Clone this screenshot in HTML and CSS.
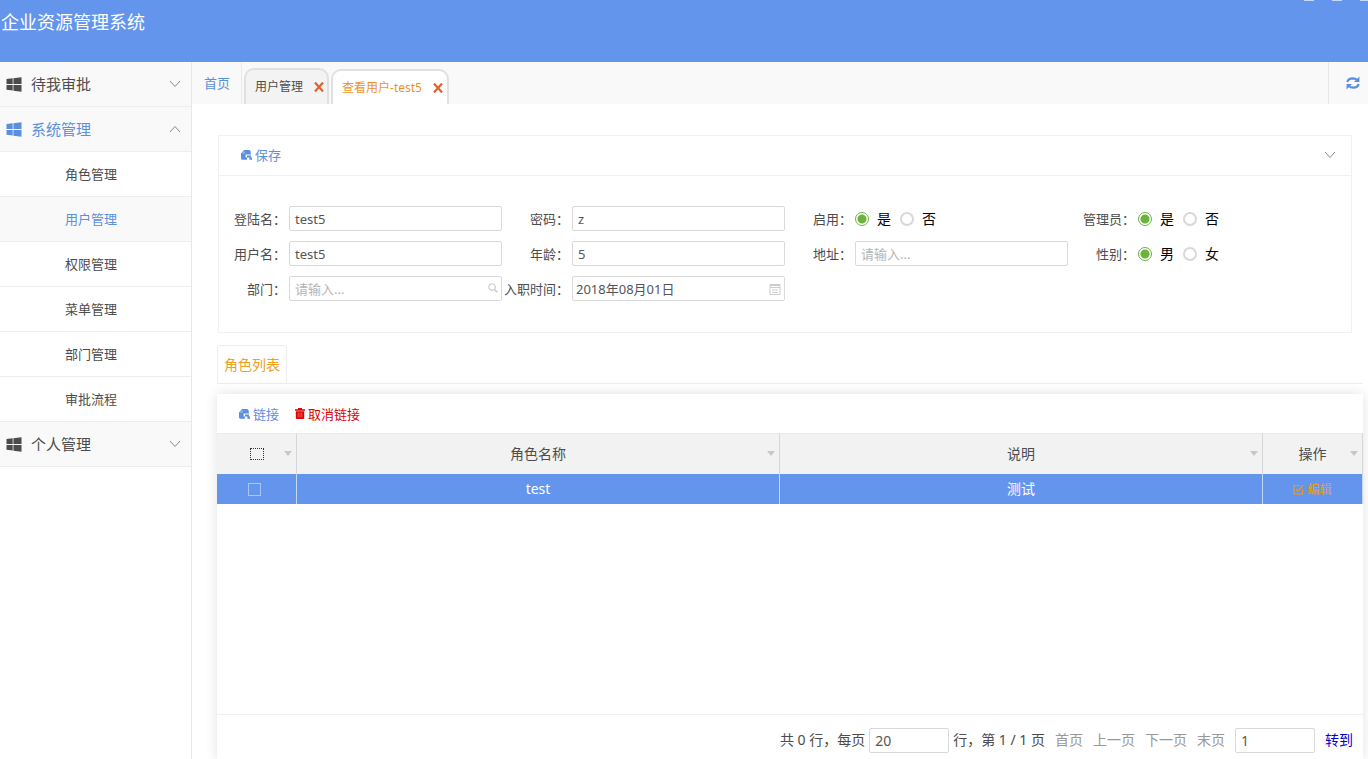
FILE: index.html
```html
<!DOCTYPE html>
<html lang="zh-CN">
<head>
<meta charset="utf-8">
<title>企业资源管理系统</title>
<link rel="stylesheet" href="styles.css">
</head>
<body>
<svg class="symbols" aria-hidden="true">
  <symbol id="win" viewBox="0 0 16 16"><path d="M0 2.2 6.6 1.4V7.5H0ZM7.4 1.2 16 .2V7.5H7.4ZM0 8.4H6.6V14.5L0 13.7ZM7.4 8.4H16V15.8L7.4 14.7Z" fill="currentColor"/></symbol>
  <symbol id="down" viewBox="0 0 12 8"><path d="M1 1 6 6.5 11 1" fill="none" stroke="currentColor"/></symbol>
  <symbol id="up" viewBox="0 0 12 8"><path d="M1 7 6 1.5 11 7" fill="none" stroke="currentColor"/></symbol>
  <symbol id="cross" viewBox="0 0 10 10"><path d="M1 .5 9 9.5M9 .5 1 9.5" fill="none" stroke="currentColor" stroke-width="2.2"/></symbol>
  <symbol id="save" viewBox="0 0 11 10"><path d="M3 0H8Q9.4 0 9.6 1.5L10 4.6H4.6V7.6H6V9.8H1.5Q0 9.8 0 8.3V3.8Q0 2.8 1 2.4ZM6 5.4H10V7.4H11V9.8H8.4V7.6H6Z" fill="currentColor"/><path d="M3.2 1.4V3.2H1.4" fill="none" stroke="#fff" stroke-width=".7" opacity=".7"/></symbol>
  <symbol id="trash" viewBox="0 0 10 11"><path d="M3 0H7V1.3H10V2.8H0V1.3H3ZM.8 3.2H9.2V9.8Q9.2 11 8 11H2Q.8 11 .8 9.8Z" fill="currentColor"/><path d="M3.2 4.6V9.4M5 4.6V9.4M6.8 4.6V9.4" stroke="#fff" stroke-width=".6" opacity=".6"/></symbol>
  <symbol id="edit" viewBox="0 0 11 11"><path d="M9.5 5.5V10H1V1.5H7M3.2 5 5 7.2 10 1.2" fill="none" stroke="currentColor" stroke-width="1.2"/></symbol>
  <symbol id="refresh" viewBox="0 0 14 14"><path d="M1.4 6Q2 2.6 6.6 2.4 9.6 2.4 11.2 4M12.6 8Q12 11.4 7.4 11.6 4.4 11.6 2.8 10" fill="none" stroke="currentColor" stroke-width="2.2"/><path d="M13.4 .6V6H8ZM.6 13.4V8H6Z" fill="currentColor"/></symbol>
  <symbol id="search" viewBox="0 0 11 11"><circle cx="4.5" cy="4.5" r="3.6" fill="none" stroke="currentColor" stroke-width="1.2"/><path d="M7 7 10.3 10.3" stroke="currentColor" stroke-width="1.6"/></symbol>
  <symbol id="calendar" viewBox="0 0 12 12"><path d="M1 1.5H11V11.5H1ZM1 2.5H11M1 4.5H11M3 7H9M3 9.5H9" fill="none" stroke="currentColor"/></symbol>
</svg>

<header class="topbar">
  <h1 class="brand">企业资源管理系统</h1>
  <div class="window-marks"><span></span><span></span><span></span></div>
</header>

<div class="layout">
  <nav class="sidebar">
    <button class="group"><svg class="win"><use href="#win"/></svg><span class="group-name">待我审批</span><svg class="chevron"><use href="#down"/></svg></button>
    <button class="group group-active"><svg class="win"><use href="#win"/></svg><span class="group-name">系统管理</span><svg class="chevron"><use href="#up"/></svg></button>
    <a class="item" href="#">角色管理</a>
    <a class="item item-active" href="#">用户管理</a>
    <a class="item" href="#">权限管理</a>
    <a class="item" href="#">菜单管理</a>
    <a class="item" href="#">部门管理</a>
    <a class="item" href="#">审批流程</a>
    <button class="group"><svg class="win"><use href="#win"/></svg><span class="group-name">个人管理</span><svg class="chevron"><use href="#down"/></svg></button>
  </nav>

  <main class="main">
    <div class="tabs">
      <a class="home" href="#">首页</a>
      <div class="tab"><a href="#">用户管理</a><button class="close" aria-label="关闭用户管理"><svg><use href="#cross"/></svg></button></div>
      <div class="tab tab-active"><a href="#">查看用户-test5</a><button class="close" aria-label="关闭查看用户"><svg><use href="#cross"/></svg></button></div>
      <button class="refresh" aria-label="刷新"><svg><use href="#refresh"/></svg></button>
    </div>

    <section class="panel">
      <div class="panel-head">
        <button class="action"><svg class="save"><use href="#save"/></svg>保存</button>
        <button class="fold" aria-label="折叠"><svg class="chevron"><use href="#down"/></svg></button>
      </div>
      <form class="form">
        <div class="field"><label for="login">登陆名：</label><input class="text" id="login" value="test5"></div>
        <div class="field"><label for="pwd">密码：</label><input class="text" id="pwd" value="z"></div>
        <div class="field"><span class="caption">启用：</span><div class="radios"><label><input type="radio" name="enabled" checked>是</label><label><input type="radio" name="enabled">否</label></div></div>
        <div class="field"><span class="caption">管理员：</span><div class="radios"><label><input type="radio" name="admin" checked>是</label><label><input type="radio" name="admin">否</label></div></div>
        <div class="field"><label for="user">用户名：</label><input class="text" id="user" value="test5"></div>
        <div class="field"><label for="age">年龄：</label><input class="text" id="age" value="5"></div>
        <div class="field"><label for="addr">地址：</label><input class="text" id="addr" placeholder="请输入..."></div>
        <div class="field"><span class="caption">性别：</span><div class="radios"><label><input type="radio" name="sex" checked>男</label><label><input type="radio" name="sex">女</label></div></div>
        <div class="field"><label for="dept">部门：</label><div class="with-icon"><input class="text" id="dept" placeholder="请输入..."><svg class="search"><use href="#search"/></svg></div></div>
        <div class="field"><label for="date">入职时间：</label><div class="with-icon"><input class="text date" id="date" value="2018年08月01日"><svg class="calendar"><use href="#calendar"/></svg></div></div>
      </form>
    </section>

    <div class="subtabs"><a class="subtab" href="#">角色列表</a></div>

    <section class="grid-panel">
      <div class="grid-tools">
        <button class="action"><svg class="save"><use href="#save"/></svg>链接</button>
        <button class="action danger"><svg class="trash"><use href="#trash"/></svg>取消链接</button>
      </div>
      <table class="roles">
        <colgroup><col class="col-check"><col><col><col class="col-ops"></colgroup>
        <thead>
          <tr>
            <th><div class="cell"><input class="check-all" type="checkbox" aria-label="全选"><i class="sort"></i></div></th>
            <th><div class="cell">角色名称<i class="sort"></i></div></th>
            <th><div class="cell">说明<i class="sort"></i></div></th>
            <th><div class="cell">操作<i class="sort"></i></div></th>
          </tr>
        </thead>
        <tbody>
          <tr>
            <td><input class="check" type="checkbox" aria-label="选择 test"></td>
            <td>test</td>
            <td>测试</td>
            <td><button class="edit"><svg><use href="#edit"/></svg>编辑</button></td>
          </tr>
        </tbody>
      </table>
      <footer class="pager">
        <label for="size">共 0 行，每页</label>
        <input class="text page-input" id="size" value="20">
        <span class="page-info">行，第 1 / 1 页</span>
        <a href="#">首页</a><a href="#">上一页</a><a href="#">下一页</a><a href="#">末页</a>
        <input class="text page-input" value="1" aria-label="页码">
        <a class="go" href="#">转到</a>
      </footer>
    </section>
  </main>
</div>
</body>
</html>
```

FILE: styles.css
```css
* { box-sizing: border-box; }

body {
  margin: 0;
  height: 100vh;
  display: flex;
  flex-direction: column;
  overflow: hidden;
  background: #fff;
  color: #4c4c4c;
  font: 14px/20px "Noto Sans", "Noto Sans CJK SC", sans-serif;
}

button, input { font: inherit; color: inherit; }
button { padding: 0; border: 0; background: none; cursor: pointer; }
a { color: inherit; text-decoration: none; }
svg { display: block; flex: none; }
.symbols { position: absolute; width: 0; height: 0; }

.topbar {
  flex: none;
  height: 62px;
  display: flex;
  justify-content: space-between;
  background: #6495ed;
  color: #fff;
}
.brand { margin: 0; padding: 10px 1px; font-size: 18px; line-height: 24px; font-weight: 400; }
.window-marks { display: flex; gap: 18px; }
.window-marks span { width: 10px; height: 1px; background: #c3d8fb; }
.window-marks span:last-child { width: 8px; }

.layout { flex: 1; min-height: 0; display: flex; }

.sidebar { flex: none; width: 192px; border-right: 1px solid #e8e8e8; }
.group, .item {
  width: 100%;
  height: 45px;
  display: flex;
  align-items: center;
  border-bottom: 1px solid #eee;
}
.group { gap: 9px; padding: 0 10px 0 6px; background: #f9f9f9; font-size: 15px; }
.group-name { flex: 1; text-align: left; }
.group-active, .item-active { color: #5b8fe0; }
.win { width: 16px; height: 15px; }
.chevron { width: 12px; height: 8px; color: #888; }
.item { padding-left: 65px; font-size: 13px; }
.item-active { background: #f9f9f9; }

.main { flex: 1; min-width: 0; display: flex; flex-direction: column; }

.tabs { flex: none; height: 42px; display: flex; align-items: flex-end; gap: 2px; background: #f9f9f9; font-size: 12px; }
.home {
  align-self: stretch;
  display: flex;
  align-items: center;
  padding: 0 11px 0 12px;
  border-right: 1px solid #eaeaea;
  color: #5b8fe0;
  font-size: 13px;
}
.tab {
  height: 36px;
  display: flex;
  align-items: center;
  gap: 11px;
  padding: 0 3px 0 9px;
  border: 2px solid #e0e0e0;
  border-bottom: 0;
  border-radius: 10px 10px 0 0;
  background: #f3f3f3;
}
.tab-active { height: 35px; padding-right: 4px; background: #fff; color: #f0921e; font-size: 12px; }
.close { color: #e2622f; }
.close svg { width: 10px; height: 10px; }
.refresh { align-self: stretch; margin-left: auto; padding: 0 8px 0 17px; border-left: 1px solid #e8e8e8; color: #5b8fe0; }
.refresh svg { width: 14px; height: 14px; }

.panel { flex: none; margin: 31px 16px 0 26px; border: 1px solid #f1f1f1; }
.panel-head {
  height: 40px;
  display: flex;
  align-items: center;
  justify-content: space-between;
  padding: 0 15px 2px 22px;
  border-bottom: 1px solid #f1f1f1;
}
.action { display: flex; align-items: center; gap: 3px; color: #5b8fe0; font-size: 13px; }
.danger { color: #e00000; }
.save { width: 11px; height: 10px; }
.trash { width: 10px; height: 11px; }

.form {
  display: grid;
  grid-template-columns: repeat(4, 1fr);
  row-gap: 10px;
  padding: 30px 0 31px;
  font-size: 13px;
}
.field { display: flex; align-items: center; height: 25px; min-width: 0; }
.field > label, .caption { flex: none; width: 70px; padding-right: 3px; text-align: right; white-space: nowrap; }
.text {
  flex: 1;
  width: 100%;
  min-width: 0;
  height: 25px;
  padding: 0 5px;
  border: 1px solid #d9d9d9;
  border-radius: 2px;
  background: #fff;
  color: #555;
}
.text::placeholder { color: #b5b5b5; }
.date { padding: 0 3px; }
.with-icon { flex: 1; min-width: 0; position: relative; display: flex; }
.with-icon svg { position: absolute; right: 4px; top: 7px; color: #ccc; }
.search { width: 10px; height: 10px; }
.calendar { width: 12px; height: 12px; }
.radios { display: flex; gap: 9px; color: #000; font-size: 14px; }
.radios label { display: flex; align-items: center; gap: 8px; }
.radios input {
  appearance: none;
  width: 14px;
  height: 14px;
  margin: 0;
  border: 2px solid #d8d8d8;
  border-radius: 50%;
  background: #fff;
}
.radios input:checked { border: 1px solid #6cb33e; background: radial-gradient(circle, #6cb33e 4px, #fff 5px); }

.subtabs { flex: none; display: flex; margin: 12px 5px 10px 25px; border-bottom: 1px solid #ececf2; }
.subtab {
  height: 38px;
  padding: 9px 6px;
  border: 1px solid #eee;
  border-bottom: 0;
  border-radius: 3px 3px 0 0;
  color: #f0a020;
}

.grid-panel {
  flex: 1;
  min-height: 0;
  display: flex;
  flex-direction: column;
  margin: 0 5px 0 25px;
  background: #fff;
  box-shadow: 0 0 12px rgba(0, 0, 0, 0.12);
}
.grid-tools { height: 39px; display: flex; align-items: center; gap: 16px; padding: 0 22px; }
.roles { width: 100%; table-layout: fixed; border-collapse: separate; border-spacing: 0; }
.col-check { width: 80px; }
.col-ops { width: 100px; }
.roles th, .roles td { padding: 0; border-right: 1px solid #d6d6d6; font-weight: 400; text-align: center; vertical-align: middle; }
.roles th { height: 41px; background: #f2f2f2; border-top: 1px solid #ebebeb; }
.roles td { height: 30px; background: #6495ed; color: #fff; border-color: #c5d8f8; }
.cell { position: relative; height: 20px; display: flex; align-items: center; justify-content: center; }
.sort {
  position: absolute;
  right: 4px;
  top: 7px;
  border: 4px solid transparent;
  border-top: 5px solid #c8c8c8;
  border-bottom: 0;
}
.check-all, .check { appearance: none; display: block; margin: 0 auto; }
.check-all { width: 14px; height: 12px; border: 1px dotted #333; }
.roles td:first-child { padding-right: 4px; }
.check { width: 13px; height: 13px; border: 1px solid #a9c5f6; }
.edit { display: inline-flex; align-items: center; gap: 3px; vertical-align: middle; color: #eb9c14; font-size: 12px; font-weight: 500; }
.edit svg { width: 11px; height: 11px; }

.pager {
  flex: none;
  height: 45px;
  margin-top: auto;
  padding: 6px 10px 0 0;
  display: flex;
  align-items: center;
  justify-content: flex-end;
  gap: 10px;
  border-top: 1px solid #f0f0f0;
}
.pager a { color: #999; }
.pager .page-input { flex: none; width: 80px; }
.pager label { margin-right: -6px; }
.page-info { margin-left: -6px; }
.pager .go { color: #0000d0; }
```
